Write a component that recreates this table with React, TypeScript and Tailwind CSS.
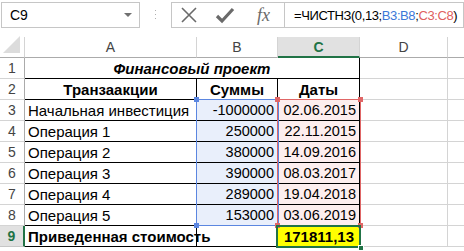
import React from "react";

const cols = "grid-cols-[25px_172px_81px_82px_88px_16px]";

type Row = { a: string; b: string; c: string };
const data: Row[] = [
  { a: "Начальная инвестиция", b: "-1000000", c: "02.06.2015" },
  { a: "Операция 1", b: "250000", c: "22.11.2015" },
  { a: "Операция 2", b: "380000", c: "14.09.2016" },
  { a: "Операция 3", b: "390000", c: "08.03.2017" },
  { a: "Операция 4", b: "289000", c: "19.04.2018" },
  { a: "Операция 5", b: "153000", c: "03.06.2019" },
];

function RowHead({ n, active }: { n: number; active?: boolean }) {
  return active ? (
    <div className="h-[21px] flex items-center justify-center bg-[#e1e1e1] border-r-2 border-r-[#217346] border-b border-b-[#c6c6c6] text-[#217346] font-bold text-[14px]">
      {n}
    </div>
  ) : (
    <div className="h-[21px] flex items-center justify-center border-r border-r-[#ababab] border-b border-b-[#d4d4d4] text-[#444] text-[14px]">
      {n}
    </div>
  );
}

function Empty() {
  return <div className="h-[21px] border-r border-b border-[#d4d4d4]" />;
}

export default function App() {
  return (
    <div className="w-[464px] h-[251px] overflow-hidden bg-white text-[15px] text-black font-['Liberation_Sans',Arial,sans-serif] leading-none">
      {/* formula bar */}
      <div className="h-[37px] flex items-start pt-[2px]">
        <div className="shrink-0 ml-[1px] w-[139px] h-[26px] border border-[#c6c6c6] flex items-center pl-[8px] pr-[4px] text-[14px]">
          <span className="flex-1">C9</span>
          <svg width="8" height="5" viewBox="0 0 8 5" className="mr-[3px]">
            <path d="M0 0 L8 0 L4 4 Z" fill="#707070" />
          </svg>
        </div>
        <div className="shrink-0 w-[31px] h-[26px] flex items-center justify-center">
          <svg width="3" height="12" viewBox="0 0 3 12">
            <rect x="1" y="1" width="1" height="1" fill="#b0b0b0" />
            <rect x="1" y="5" width="1" height="1" fill="#b0b0b0" />
            <rect x="1" y="9" width="1" height="1" fill="#b0b0b0" />
          </svg>
        </div>
        <div className="shrink-0 w-[113px] h-[26px] border border-[#c6c6c6] border-r-0 flex items-center">
          <svg width="18" height="18" viewBox="0 0 18 18" className="ml-[8px]">
            <path d="M2 2 L16 16 M16 2 L2 16" stroke="#6a6a6a" strokeWidth="1.6" />
          </svg>
          <svg width="20" height="20" viewBox="0 0 20 20" className="ml-[17px]">
            <path d="M2 11 L7 16 L18 4" stroke="#6a6a6a" strokeWidth="3.2" fill="none" />
          </svg>
          <span className="ml-[22px] text-[18px] italic text-[#6a6a6a] font-['Liberation_Serif',serif]">fx</span>
        </div>
        <div className="min-w-0 flex-1 h-[26px] border border-[#c6c6c6] flex items-center pl-[9px] whitespace-nowrap overflow-hidden text-[13px] tracking-[-0.4px]">
          <span>=ЧИСТНЗ(0,13;</span>
          <span className="text-[#3c78d8]">B3:B8</span>
          <span>;</span>
          <span className="text-[#e06060]">C3:C8</span>
          <span>)</span>
        </div>
      </div>

      {/* sheet */}
      <div className="relative">
        <div className={`grid ${cols}`}>
          {/* column headers */}
          <div className="h-[21px] border-r border-r-[#d4d4d4] border-b border-b-[#ababab] relative">
            <svg width="18" height="18" viewBox="0 0 18 18" className="absolute right-[3px] bottom-[3px]">
              <path d="M17 0 L17 17 L0 17 Z" fill="#dcdcdc" />
            </svg>
          </div>
          <div className="h-[21px] flex items-center justify-center border-r border-r-[#d4d4d4] border-b border-b-[#ababab] text-[#444] text-[14px]">A</div>
          <div className="h-[21px] flex items-center justify-center border-r border-r-[#d4d4d4] border-b border-b-[#ababab] text-[#444] text-[14px]">B</div>
          <div className="h-[21px] flex items-center justify-center bg-[#e1e1e1] border-r border-r-[#d4d4d4] border-b-2 border-b-[#217346] text-[#217346] font-bold text-[14px]">C</div>
          <div className="h-[21px] flex items-center justify-center border-r border-r-[#d4d4d4] border-b border-b-[#ababab] text-[#444] text-[14px]">D</div>
          <div className="h-[21px] border-b border-b-[#ababab]" />

          {/* row 1 */}
          <RowHead n={1} />
          <div className="col-span-3 h-[21px] flex items-center justify-center pt-[1px] border-r border-b border-black font-bold italic">
            Финансовый проект
          </div>
          <Empty />
          <div className="h-[21px] border-b border-[#d4d4d4]" />

          {/* row 2 */}
          <RowHead n={2} />
          <div className="h-[21px] flex items-center justify-center pt-[1px] border-r border-b border-black font-bold">Транзаакции</div>
          <div className="h-[21px] flex items-center justify-center pt-[1px] border-r border-b border-black font-bold">Суммы</div>
          <div className="h-[21px] flex items-center justify-center pt-[1px] border-r border-b border-black font-bold">Даты</div>
          <Empty />
          <div className="h-[21px] border-b border-[#d4d4d4]" />

          {data.map((r, i) => (
            <React.Fragment key={i}>
              <RowHead n={i + 3} />
              <div className="h-[21px] flex items-center pt-[1px] pl-[3px] border-r border-b border-black whitespace-nowrap">{r.a}</div>
              <div className="h-[21px] flex items-center pt-[1px] justify-end pr-[3px] border-r border-b border-black bg-[#e9effb] text-[14.5px]">{r.b}</div>
              <div className="h-[21px] flex items-center pt-[1px] justify-end pr-[3px] border-r border-b border-black bg-[#fdeeee] text-[14.5px]">{r.c}</div>
              <Empty />
              <div className="h-[21px] border-b border-[#d4d4d4]" />
            </React.Fragment>
          ))}

          {/* row 9 */}
          <RowHead n={9} active />
          <div className="h-[21px] flex items-center pt-[1px] pl-[3px] border-r border-b border-black font-bold whitespace-nowrap">Приведенная стоимость</div>
          <div className="h-[21px] border-r border-b border-black" />
          <div className="h-[21px] flex items-center pt-[1px] justify-end pr-[5px] border-r border-b border-black bg-[#ffff00] font-bold">171811,13</div>
          <Empty />
          <div className="h-[21px] border-b border-[#d4d4d4]" />
        </div>

        {/* range highlight B3:B8 */}
        <div className="absolute left-[196px] top-[62px] w-[83px] h-[127px] border border-[#5b86e0] pointer-events-none" />
        <div className="absolute left-[194px] top-[60px] w-[5px] h-[5px] bg-[#5b86e0]" />
        <div className="absolute left-[194px] top-[186px] w-[5px] h-[5px] bg-[#5b86e0]" />
        {/* range highlight C3:C8 */}
        <div className="absolute left-[277px] top-[62px] w-[84px] h-[127px] border border-[#e06666] pointer-events-none" />
        <div className="absolute left-[275px] top-[60px] w-[5px] h-[5px] bg-[#e06666]" />
        <div className="absolute left-[358px] top-[60px] w-[5px] h-[5px] bg-[#e06666]" />
        <div className="absolute left-[275px] top-[186px] w-[5px] h-[5px] bg-[#e06666]" />
        <div className="absolute left-[358px] top-[186px] w-[5px] h-[5px] bg-[#e06666]" />
        {/* active cell C9 */}
        <div className="absolute left-[276px] top-[188px] w-[85px] h-[23px] border-2 border-[#217346] pointer-events-none" />
        <div className="absolute left-[358px] top-[208px] w-[6px] h-[6px] bg-[#217346] border border-white" />
      </div>
    </div>
  );
}
